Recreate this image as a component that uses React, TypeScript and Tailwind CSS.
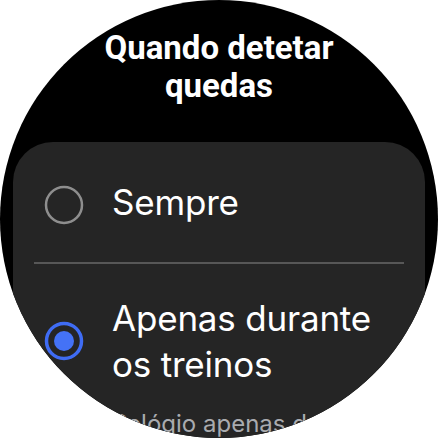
import React from 'react'

const Radio = ({ checked }: { checked: boolean }) => (
  <svg width="40" height="40" viewBox="0 0 40 40" className="shrink-0">
    {checked ? (
      <>
        <circle cx="20" cy="20" r="17.5" fill="none" stroke="#3f6cf4" strokeWidth="3.5" />
        <circle cx="20" cy="20" r="10" fill="#4472f6" />
      </>
    ) : (
      <circle cx="20" cy="20" r="18" fill="none" stroke="#8e8e8e" strokeWidth="2.5" />
    )}
  </svg>
)

const App = () => {
  return (
    <div className="w-[438px] h-[438px] bg-white">
      <div className="w-[438px] h-[438px] rounded-full bg-black overflow-hidden flex flex-col">
        <h1 className="pt-[29px] text-center text-white font-bold text-[33px] leading-[38px] font-['Roboto',sans-serif]">
          Quando detetar
          <br />
          quedas
        </h1>
        <div className="mt-[37px] mx-[13px] rounded-[40px] bg-[#252525] font-['Inter',sans-serif] text-white">
          <div className="h-[120px] flex items-center pl-[31px] gap-[28px]">
            <div className="mt-[6px]">
              <Radio checked={false} />
            </div>
            <span className="text-[35px] leading-[42px] tracking-[-0.2px]">Sempre</span>
          </div>
          <div className="mx-[21px] h-[2px] bg-[#575757]" />
          <div className="pt-[31px] flex items-center pl-[31px] gap-[28px]">
            <Radio checked={true} />
            <span className="text-[35px] leading-[46px] tracking-[-0.2px]">
              Apenas durante
              <br />
              os treinos
            </span>
          </div>
          <p className="pt-[22px] pl-[99px] pr-[20px] text-[24px] leading-[30px] text-[#a9abaf]">
            Relógio apenas deteta quedas durante os treinos registados.
          </p>
        </div>
      </div>
    </div>
  )
}

export default App
